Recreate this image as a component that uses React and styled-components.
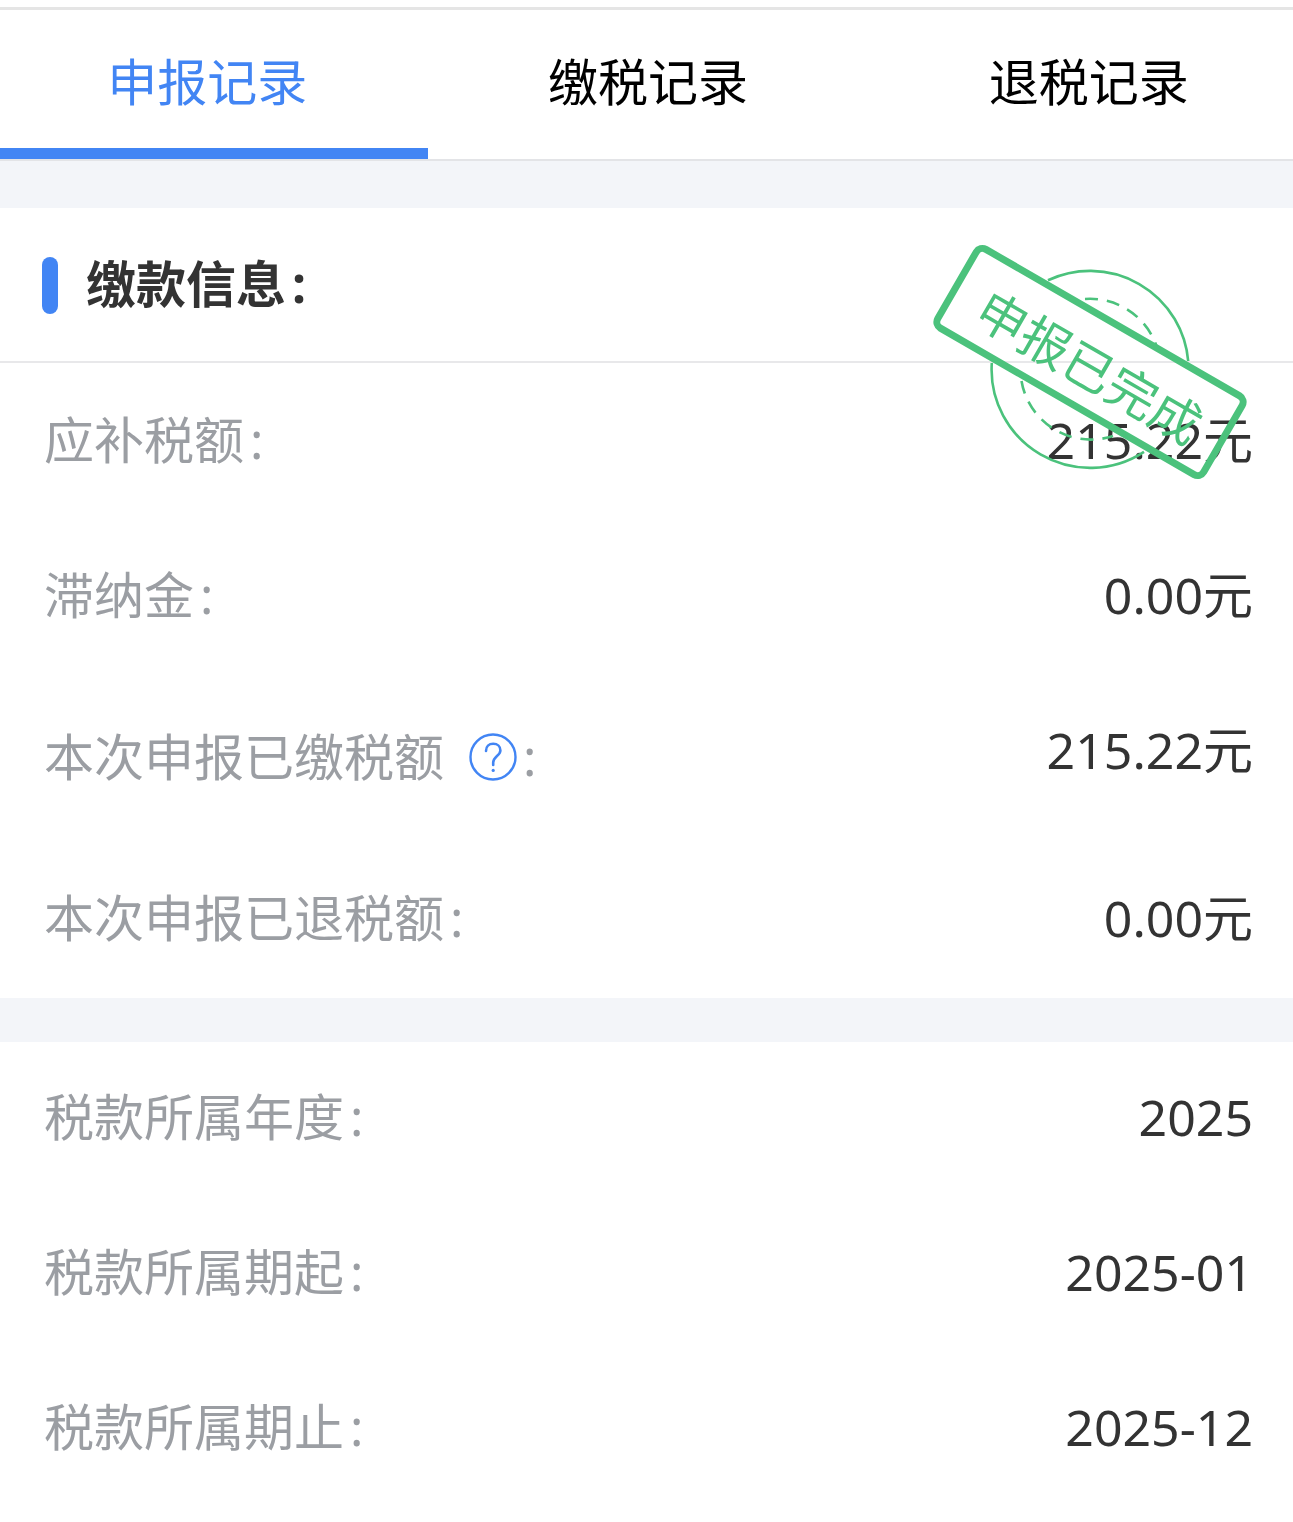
import { useState } from "react";
import styled, { createGlobalStyle } from "styled-components";

const GlobalStyle = createGlobalStyle`
  * {
    box-sizing: border-box;
  }

  body {
    margin: 0;
    background: #ffffff;
    font-family: "Noto Sans", "Noto Sans CJK SC", sans-serif;
    font-size: 50px;
    line-height: 60px;
    color: #333333;
  }
`;

const Page = styled.main`
  padding-top: 7px;
  overflow: hidden;
`;

const TabBar = styled.nav`
  border-top: 3px solid #e5e5e5;
  border-bottom: 2px solid #e3e4e7;
`;

const TabList = styled.div`
  display: grid;
  grid-template-columns: repeat(3, 1fr);
  margin: 0 -16px 0 -13px;
`;

const Tab = styled.button`
  height: 149px;
  padding: 6px 0 0;
  border: none;
  border-bottom: 11px solid ${({ $active }) => ($active ? "#4285f4" : "transparent")};
  background: transparent;
  color: ${({ $active }) => ($active ? "#4285f4" : "#000000")};
  font: inherit;
  cursor: pointer;
`;

const Divider = styled.div`
  height: ${({ $height }) => $height}px;
  background: #f3f5f9;
`;

const Section = styled.section`
  position: relative;
`;

const SectionHeader = styled.header`
  display: flex;
  align-items: center;
  gap: 28px;
  height: 155px;
  margin-bottom: 2px;
  padding: 2px 42px 0;
  border-bottom: 2px solid #e8e8ea;
`;

const Marker = styled.span`
  width: 16px;
  height: 57px;
  border-radius: 8px;
  background: #4285f4;
`;

const Title = styled.h2`
  margin: 0;
  padding-bottom: 4px;
  font-size: 50px;
  font-weight: 700;
`;

const List = styled.dl`
  margin: 0;
`;

const Row = styled.div`
  display: flex;
  justify-content: space-between;
  align-items: flex-start;
  padding: 45px 40px 50px 44px;
`;

const Label = styled.dt`
  display: flex;
  align-items: center;
  min-height: ${({ $tall }) => ($tall ? 73 : 60)}px;
  color: #9b9ea3;
`;

const Colon = styled.span`
  margin-left: 6px;
`;

const Value = styled.dd`
  margin: 0;
`;

const HelpButton = styled.button`
  display: flex;
  margin: 0 0 0 25px;
  padding: 0;
  border: none;
  background: transparent;
  cursor: pointer;
`;

const StampImage = styled.svg`
  position: absolute;
  top: 32px;
  right: 40px;
  width: 326px;
  height: 244px;
  pointer-events: none;
`;

const HelpIcon = () => (
  <svg width="48" height="48" viewBox="0 0 48 48" fill="none" stroke="#4285f4">
    <circle cx="24" cy="24" r="22.5" strokeWidth="2.4" />
    <path
      d="M17 18C17 13.5 20 10.8 24.2 10.8C28.6 10.8 31.4 13.6 31.4 17.4C31.4 22.6 24.2 23.5 24.2 29.5V32"
      strokeWidth="2.6"
      strokeLinecap="round"
    />
    <circle cx="24.2" cy="37.4" r="1.6" fill="#4285f4" stroke="none" />
  </svg>
);

const Stamp = () => (
  <StampImage viewBox="0 0 326 244" fill="none" stroke="#4bc27c">
    <path d="M121 40.3A98.5 98.5 0 0 1 261.2 121" strokeWidth="2.6" />
    <path d="M64.8 123A98.5 98.5 0 0 0 217 211.8" strokeWidth="2.6" />
    <path d="M158 59A70.3 70.3 0 0 1 229.500 106" strokeWidth="2.6" strokeDasharray="13 9" />
    <path d="M94.5 141A70.3 70.3 0 0 0 186 196" strokeWidth="2.6" strokeDasharray="13 9" />
    <g transform="translate(163 122) rotate(30)">
      <rect x="-153.5" y="-45.5" width="307" height="91" rx="7" strokeWidth="7" />
      <text
        x="2"
        y="24"
        textAnchor="middle"
        fontSize="50"
        fill="#4bc27c"
        stroke="none"
      >
        申报已完成
      </text>
    </g>
  </StampImage>
);

const tabs = ["申报记录", "缴税记录", "退税记录"];

const payment = [
  { label: "应补税额", value: "215.22元" },
  { label: "滞纳金", value: "0.00元" },
  { label: "本次申报已缴税额", value: "215.22元", help: true },
  { label: "本次申报已退税额", value: "0.00元" },
];

const period = [
  { label: "税款所属年度", value: "2025" },
  { label: "税款所属期起", value: "2025-01" },
  { label: "税款所属期止", value: "2025-12" },
];

const InfoList = ({ items }) => (
  <List>
    {items.map(({ label, value, help }) => (
      <Row key={label}>
        <Label $tall={help}>
          {label}
          {help && (
            <HelpButton type="button" aria-label={label}>
              <HelpIcon />
            </HelpButton>
          )}
          <Colon>:</Colon>
        </Label>
        <Value>{value}</Value>
      </Row>
    ))}
  </List>
);

const App = () => {
  const [active, setActive] = useState(0);

  return (
    <Page>
      <GlobalStyle />
      <TabBar>
        <TabList>
          {tabs.map((tab, index) => (
            <Tab
              key={tab}
              type="button"
              $active={index === active}
              onClick={() => setActive(index)}
            >
              {tab}
            </Tab>
          ))}
        </TabList>
      </TabBar>
      <Divider $height={47} />
      <Section>
        <SectionHeader>
          <Marker />
          <Title>
            缴款信息<Colon>:</Colon>
          </Title>
        </SectionHeader>
        <InfoList items={payment} />
        <Stamp />
      </Section>
      <Divider $height={44} />
      <Section>
        <InfoList items={period} />
      </Section>
    </Page>
  );
};

export default App;
